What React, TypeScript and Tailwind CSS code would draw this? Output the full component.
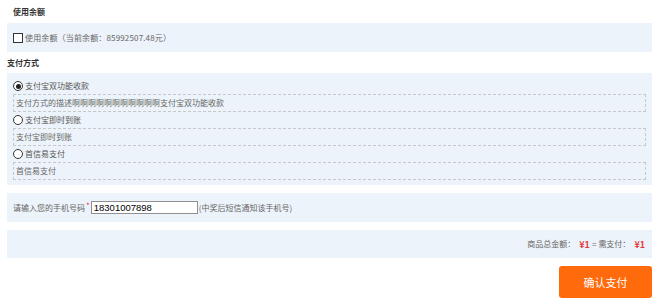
import React from "react";

const font = { fontFamily: '"Noto Sans CJK SC", "Noto Sans", sans-serif' };

function Radio({ checked }: { checked?: boolean }) {
  return (
    <span className="w-[10px] h-[10px] rounded-full border border-[#333] bg-white flex items-center justify-center shrink-0">
      {checked ? <span className="w-[5px] h-[5px] rounded-full bg-[#222]" /> : null}
    </span>
  );
}

function Method({ label, desc, checked }: { label: string; desc: string; checked?: boolean }) {
  return (
    <div>
      <div className="h-[16px] flex items-center gap-[2px]">
        <Radio checked={checked} />
        <span className="text-[8px] text-[#555] leading-none">{label}</span>
      </div>
      <div className="h-[18px] border border-dashed border-[#c8c8c8] flex items-center pl-[2px] text-[8px] text-[#666] leading-none">
        {desc}
      </div>
    </div>
  );
}

export default function App() {
  return (
    <div className="w-[659px] h-[304px] bg-white px-[7px]" style={font}>
      <div className="h-[23px] flex items-center pl-[6px] pt-[1px] text-[8px] font-bold text-[#333] leading-none">
        使用余额
      </div>
      <div className="h-[29px] bg-[#edf3fa] flex items-center px-[6px] gap-[2px]">
        <span className="w-[10px] h-[10px] border border-[#333] bg-white shrink-0" />
        <span className="text-[8px] text-[#666] leading-none tracking-[0.15px]">使用余额（当前余额：85992507.48元）</span>
      </div>
      <div className="h-[21px] flex items-center text-[8px] font-bold text-[#333] leading-none">
        支付方式
      </div>
      <div className="h-[112px] bg-[#edf3fa] pt-[5px] px-[6px]">
        <Method checked label="支付宝双功能收款" desc="支付方式的描述啊啊啊啊啊啊啊啊啊啊啊支付宝双功能收款" />
        <Method label="支付宝即时到账" desc="支付宝即时到账" />
        <Method label="首信易支付" desc="首信易支付" />
      </div>
      <div className="mt-[8px] h-[29px] bg-[#edf3fa] flex items-center px-[6px] text-[8px] text-[#666] leading-none">
        <span>请输入您的手机号码</span>
        <span className="text-[#e4393c] self-start mt-[9px] ml-[1px] mr-[1px] text-[8px]">*</span>
        <span
          className="w-[107px] h-[13px] border border-[#8f8f8f] bg-white flex items-center px-[2px] text-[9.5px] text-black leading-none"
          style={{ fontFamily: '"Liberation Sans", Arial, sans-serif' }}
        >
          18301007898
        </span>
        <span className="ml-[1px]">(中奖后短信通知该手机号)</span>
      </div>
      <div className="mt-[8px] h-[28px] bg-[#edf3fa] flex items-center justify-end pr-[7px] text-[8px] text-[#666] leading-none">
        <span>商品总金额：</span>
        <span className="text-[#e4393c] font-bold text-[9px] ml-[4px] mr-[2px]">¥1</span>
        <span>=</span>
        <span className="ml-[2px]">需支付：</span>
        <span className="text-[#e4393c] font-bold text-[9px] ml-[4px]">¥1</span>
      </div>
      <div className="mt-[8px] flex justify-end">
        <div className="w-[93px] h-[32px] bg-[#ff6a0c] rounded-[3px] flex items-center justify-center text-white text-[11px] leading-none">
          确认支付
        </div>
      </div>
    </div>
  );
}
